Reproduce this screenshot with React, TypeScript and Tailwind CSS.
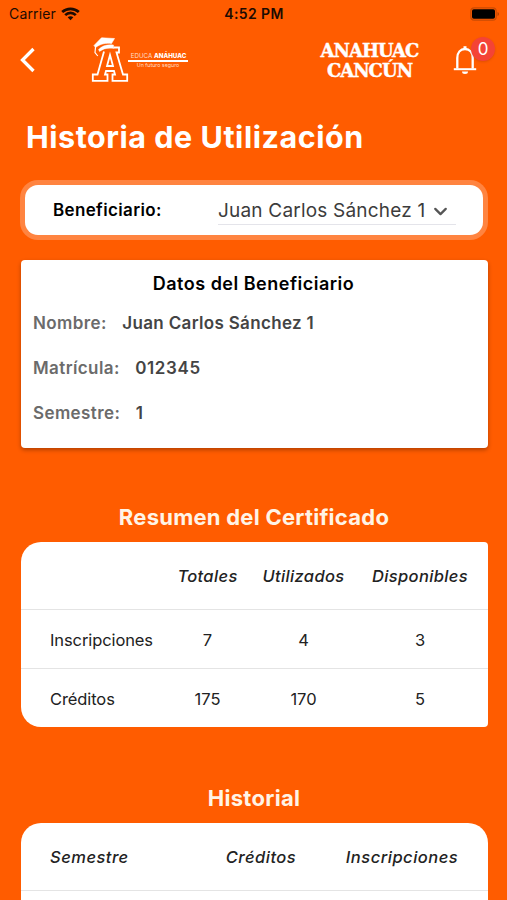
import { ChevronDown } from "lucide-react";

const beneficiary = [
  { label: "Nombre:", value: "Juan Carlos Sánchez 1", tracking: "tracking-[0.33px]" },
  { label: "Matrícula:", value: "012345", tracking: "tracking-[0.6px]" },
  { label: "Semestre:", value: "1", tracking: "tracking-[0.35px]" },
];

const summary = [
  { concept: "Inscripciones", total: 7, used: 4, available: 3 },
  { concept: "Créditos", total: 175, used: 170, available: 5 },
];

function StatusBar() {
  return (
    <div className="grid grid-cols-3 items-center h-7 pl-[9px] pr-[7px] text-[14px] leading-none text-[#1c0b02]">
      <div className="flex items-center gap-[5px]">
        <span className="tracking-[0.15px]">Carrier</span>
        <svg width="19" height="14" viewBox="0 0 19 14" fill="none" stroke="currentColor" strokeWidth="2.7">
          <path d="M1.2 5.1C5.8 .7 13.2 .7 17.8 5.1" />
          <path d="M4.2 8.1c3-2.9 7.6-2.9 10.6 0" />
          <path d="M6.7 10.3c1.6-1.5 4-1.5 5.6 0L9.5 13.2z" fill="currentColor" stroke="none" />
        </svg>
      </div>
      <span className="pr-[1px] text-center font-semibold tracking-[0.4px]">4:52 PM</span>
      <svg className="justify-self-end" width="30" height="14" viewBox="0 0 30 14">
        <rect x=".8" y=".8" width="25.4" height="12.4" rx="3.5" fill="none" stroke="#c94b04" strokeWidth="1.2" />
        <rect x="2" y="2.3" width="23" height="9.4" rx="1.8" fill="#000" />
        <path d="M27.6 5v4c1.6-.5 1.6-3.5 0-4z" fill="#a33c05" />
      </svg>
    </div>
  );
}

function EducaLogo() {
  return (
    <div className="flex items-start">
      <svg width="38" height="46" viewBox="0 0 38 46" fill="none" stroke="#fff" strokeWidth="1.8">
        {/* Block letter with its counter */}
        <path d="M13 14.5L6.5 37.5H1.8V43.8H16.5V37.5H14L15 34H23L24 37.5H21.5V43.8H36.2V37.5H32L25.5 15.5H28V10.5H23" />
        <path d="M19 18L16 29H22Z" />
        {/* Graduation cap */}
        <path d="M3 8.5L10.5 .8L23.5 1.5L20.5 6.5C15 5.5 9 7 4.5 10.5Z" fill="#fff" strokeWidth=".6" />
        <path d="M7.5 12.5C11.5 8.5 16.5 7.3 22.5 8L23 11.5C17.5 10.5 12.5 11.5 8.5 14.5Z" fill="#fff" strokeWidth=".4" />
        <path d="M4.5 10L4 15.5L6.8 19" strokeWidth="1.2" />
      </svg>
      <div className="mt-[15px] ml-[-1px] w-[60px] text-center text-[#ffdcc7]">
        <div className="h-[8px] pl-[1px] text-[6.2px] leading-[7px] whitespace-nowrap">
          EDUCA <span className="font-extrabold text-white">ANÁHUAC</span>
        </div>
        <div className="h-[2px] bg-white" />
        <div className="text-[5.3px] leading-[6px] whitespace-nowrap">Un futuro seguro</div>
      </div>
    </div>
  );
}

function Header() {
  return (
    <header className="flex items-start h-[76px] pt-[9px]">
      <svg className="mt-[10px] ml-[20px] shrink-0" width="16" height="26" viewBox="0 0 16 26" fill="none" stroke="#fff" strokeWidth="3.3">
        <path d="M13.5 2L2.5 13L13.5 24" />
      </svg>
      <div className="ml-[55px] w-[99px] shrink-0">
        <EducaLogo />
      </div>
      <div className="ml-[121px] w-[117px] shrink-0 mt-[4px] text-center font-['DejaVu_Serif',serif] font-bold text-[18px] leading-[19.5px] text-white tracking-[-1px] [-webkit-text-stroke:0.4px_#fff]">
        ANAHUAC
        <br />
        CANCÚN
      </div>
      <div className="relative ml-[25px] mt-[8px]">
        <svg width="24" height="30" viewBox="0 0 24 30" fill="none" stroke="#fff" strokeWidth="2.3">
          <path d="M4.3 23.5V13C4.3 7.5 7.5 4 12 4S19.7 7.5 19.7 13v10.5" />
          <path d="M.8 24.2H23.2" strokeWidth="2" />
          <path d="M12 1.2V4" strokeWidth="3" />
          <path d="M9 26.5h6a3 2.5 0 0 1-6 0z" fill="#fff" stroke="none" />
        </svg>
        <span className="absolute left-[18px] -top-[8px] flex h-[24px] w-[24px] items-center justify-center rounded-full bg-[#f44336] text-[17px] leading-none text-white shadow-sm">
          0
        </span>
      </div>
    </header>
  );
}

export default function App() {
  return (
    <div className="w-[507px] h-[900px] overflow-hidden bg-[#ff5c00] font-['Inter',sans-serif]">
      <StatusBar />
      <Header />

      <main className="px-5">
        <h1 className="h-[76px] pl-[6px] pt-[14px] text-[30.5px] leading-[38px] font-bold tracking-[0.53px] text-white whitespace-nowrap">
          Historia de Utilización
        </h1>

        <div className="h-[60px] w-[468px] rounded-[18px] bg-[#ff8440] p-[5px]">
          <div className="flex h-[50px] items-center rounded-[13px] bg-white pl-[28px]">
            <span className="w-[165px] pt-px text-[17px] font-semibold tracking-[0.35px] text-black">Beneficiario:</span>
            <div className="flex h-[30px] w-[238px] items-center justify-between border-b border-[#e4e4ea] pt-[3px] pr-[6px] text-[19px] tracking-[0.2px] text-[#3c3c3c] whitespace-nowrap">
              Juan Carlos Sánchez 1
              <ChevronDown size={21} strokeWidth={2.6} className="-mr-px text-[#555]" />
            </div>
          </div>
        </div>

        <section className="mt-[20px] ml-px h-[188px] w-[467px] rounded-[4px] bg-white pt-[10px] shadow-[0_2px_4px_rgba(0,0,0,0.3)]">
          <h2 className="pr-[2px] text-center text-[18px] leading-[27px] font-semibold tracking-[0.5px] text-black">
            Datos del Beneficiario
          </h2>
          <div className="pl-[12px] pt-[4px]">
            {beneficiary.map((row) => (
              <div key={row.label} className="flex h-[45px] items-center gap-[15.5px] text-[17px] font-semibold">
                <span className="tracking-[0.4px] text-[#6b6b6b]">{row.label}</span>
                <span className={`text-[#444] ${row.tracking}`}>{row.value}</span>
              </div>
            ))}
          </div>
        </section>

        <h2 className="mt-[54px] w-[468px] text-center text-[22px] leading-[30px] font-bold tracking-[0.25px] text-[#fff4e6]">
          Resumen del Certificado
        </h2>
        <section className="mt-[10px] ml-px h-[185px] w-[467px] rounded-l-[20px] rounded-r-[4px] bg-white text-[16.5px] text-[#222]">
          <div className="grid h-[68px] grid-cols-[139px_95px_97px_136px] items-center border-b border-[#e4e4e4] pt-[2px] text-center font-medium italic tracking-[0.35px]">
            <span />
            <span>Totales</span>
            <span>Utilizados</span>
            <span>Disponibles</span>
          </div>
          {summary.map((row) => (
            <div
              key={row.concept}
              className="grid h-[59px] grid-cols-[139px_95px_97px_136px] items-center border-b border-[#e4e4e4] pt-[2px] text-center last:border-b-0"
            >
              <span className="pl-[29px] text-left tracking-[-0.1px]">{row.concept}</span>
              <span>{row.total}</span>
              <span>{row.used}</span>
              <span>{row.available}</span>
            </div>
          ))}
        </section>

        <h2 className="mt-[56px] w-[468px] text-center text-[22px] leading-[30px] font-bold tracking-[0.3px] text-[#fff4e6]">
          Historial
        </h2>
        <section className="mt-[10px] ml-px h-[186px] w-[467px] rounded-[20px] bg-white text-[16.5px] text-[#222]">
          <div className="grid h-[68px] grid-cols-[170px_140px_142px] items-center border-b border-[#e4e4e4] pt-[2px] text-center font-medium italic tracking-[0.5px]">
            <span className="pl-[29px] text-left">Semestre</span>
            <span>Créditos</span>
            <span>Inscripciones</span>
          </div>
        </section>
      </main>
    </div>
  );
}
